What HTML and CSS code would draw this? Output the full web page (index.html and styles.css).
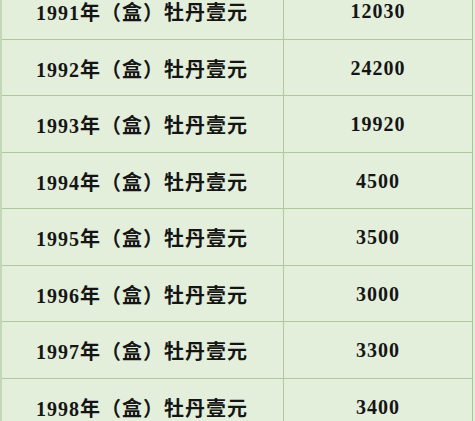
FILE: index.html
```html
<!DOCTYPE html>
<html lang="zh">
<head>
<meta charset="utf-8">
<link rel="stylesheet" href="styles.css">
</head>
<body>
<div class="sheet">
  <div class="row"><div class="name">1991年（盒）牡丹壹元</div><div class="price">12030</div></div>
  <div class="row"><div class="name">1992年（盒）牡丹壹元</div><div class="price">24200</div></div>
  <div class="row"><div class="name">1993年（盒）牡丹壹元</div><div class="price">19920</div></div>
  <div class="row"><div class="name">1994年（盒）牡丹壹元</div><div class="price">4500</div></div>
  <div class="row"><div class="name">1995年（盒）牡丹壹元</div><div class="price">3500</div></div>
  <div class="row"><div class="name">1996年（盒）牡丹壹元</div><div class="price">3000</div></div>
  <div class="row"><div class="name">1997年（盒）牡丹壹元</div><div class="price">3300</div></div>
  <div class="row"><div class="name">1998年（盒）牡丹壹元</div><div class="price">3400</div></div>
</div>
</body>
</html>
```
FILE: styles.css
```css
html, body {
  margin: 0;
  padding: 0;
  background: #e3efdb;
  overflow: hidden;
}
.sheet {
  margin-top: -17px;
  width: 473px;
  box-sizing: border-box;
  border-left: 2px solid #c3d9b6;
  border-right: 1px solid #a9c59b;
  font-family: "Liberation Serif", "Noto Sans CJK SC", serif;
  font-weight: bold;
  font-size: 20px;
  letter-spacing: 1px;
  color: #151515;
}
.row {
  display: grid;
  grid-template-columns: 282px 1fr;
  height: 56.5px;
  box-sizing: border-box;
  border-bottom: 1px solid #aec8a0;
}
.name {
  display: flex;
  align-items: center;
  padding-left: 34px;
  border-right: 1px solid #aec8a0;
  padding-top: 2px;
}
.price {
  display: flex;
  align-items: center;
  justify-content: center;
  padding-top: 2px;
}
```
